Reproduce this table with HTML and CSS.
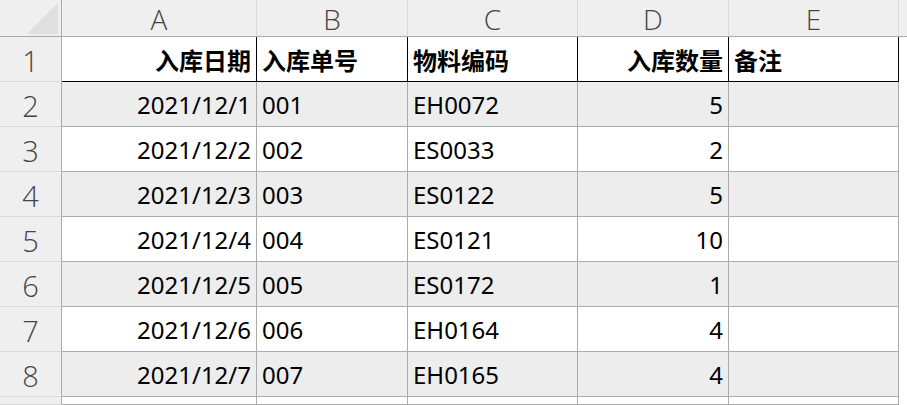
FILE: index.html
```html
<!DOCTYPE html>
<html lang="zh-CN">
<head>
<meta charset="utf-8">
<title>入库记录</title>
<link rel="stylesheet" href="styles.css">
</head>
<body>
<div class="sheet">
  <div class="corner"><span class="tri"></span></div>
  <div class="colhead">A</div>
  <div class="colhead">B</div>
  <div class="colhead">C</div>
  <div class="colhead">D</div>
  <div class="colhead">E</div>
  <div class="colhead rest"></div>

  <div class="rowhead">1</div>
  <div class="cell th right">入库日期</div>
  <div class="cell th">入库单号</div>
  <div class="cell th">物料编码</div>
  <div class="cell th right">入库数量</div>
  <div class="cell th">备注</div>
  <div class="cell blank"></div>

  <div class="rowhead">2</div>
  <div class="cell g right">2021/12/1</div>
  <div class="cell g">001</div>
  <div class="cell g">EH0072</div>
  <div class="cell g right">5</div>
  <div class="cell g"></div>
  <div class="cell blank"></div>

  <div class="rowhead">3</div>
  <div class="cell right">2021/12/2</div>
  <div class="cell">002</div>
  <div class="cell">ES0033</div>
  <div class="cell right">2</div>
  <div class="cell"></div>
  <div class="cell blank"></div>

  <div class="rowhead">4</div>
  <div class="cell g right">2021/12/3</div>
  <div class="cell g">003</div>
  <div class="cell g">ES0122</div>
  <div class="cell g right">5</div>
  <div class="cell g"></div>
  <div class="cell blank"></div>

  <div class="rowhead">5</div>
  <div class="cell right">2021/12/4</div>
  <div class="cell">004</div>
  <div class="cell">ES0121</div>
  <div class="cell right">10</div>
  <div class="cell"></div>
  <div class="cell blank"></div>

  <div class="rowhead">6</div>
  <div class="cell g right">2021/12/5</div>
  <div class="cell g">005</div>
  <div class="cell g">ES0172</div>
  <div class="cell g right">1</div>
  <div class="cell g"></div>
  <div class="cell blank"></div>

  <div class="rowhead">7</div>
  <div class="cell right">2021/12/6</div>
  <div class="cell">006</div>
  <div class="cell">EH0164</div>
  <div class="cell right">4</div>
  <div class="cell"></div>
  <div class="cell blank"></div>

  <div class="rowhead">8</div>
  <div class="cell g right">2021/12/7</div>
  <div class="cell g">007</div>
  <div class="cell g">EH0165</div>
  <div class="cell g right">4</div>
  <div class="cell g"></div>
  <div class="cell blank"></div>

  <div class="rowhead"></div>
  <div class="cell right"></div>
  <div class="cell"></div>
  <div class="cell"></div>
  <div class="cell right"></div>
  <div class="cell"></div>
  <div class="cell blank"></div>
</div>
</body>
</html>
```

FILE: styles.css
```css
html, body {
  margin: 0;
  padding: 0;
  background: #ffffff;
  overflow: hidden;
}

.sheet {
  display: grid;
  grid-template-columns: 62px 195px 151px 170px 151px 170px 1fr;
  grid-template-rows: 37px repeat(8, 45px) 8px;
  width: 907px;
  height: 405px;
  overflow: hidden;
  font-family: "Noto Sans", "Noto Sans CJK SC", sans-serif;
}

.corner {
  background: #efefef;
  border-right: 1px solid #ababab;
  border-bottom: 1px solid #ababab;
  display: flex;
  justify-content: flex-end;
  align-items: flex-end;
  padding: 0 3px 2px 0;
}

.tri {
  width: 31px;
  height: 31px;
  background: #dfdfdf;
  clip-path: polygon(100% 0, 100% 100%, 0 100%);
}

.colhead {
  background: #efefef;
  border-right: 1px solid #d9d9d9;
  border-bottom: 1px solid #ababab;
  display: flex;
  align-items: center;
  justify-content: center;
  font-family: "Open Sans", "Noto Sans", sans-serif;
  font-weight: 300;
  font-size: 28px;
  color: #444444;
  line-height: 34px;
  padding-top: 1px;
}

.colhead.rest {
  border-right: none;
}

.rowhead {
  background: #efefef;
  border-right: 1px solid #ababab;
  border-bottom: 1px solid #d9d9d9;
  display: flex;
  align-items: center;
  justify-content: center;
  font-family: "Open Sans", "Noto Sans", sans-serif;
  font-weight: 300;
  font-size: 29px;
  color: #444444;
  line-height: 40px;
  padding-top: 3px;
}

.cell {
  border-right: 1px solid #ababab;
  border-bottom: 1px solid #ababab;
  display: flex;
  align-items: center;
  padding: 0 5px 0 5px;
  font-size: 24px;
  color: #000000;
  white-space: nowrap;
  overflow: hidden;
  background: #ffffff;
}

.cell.right {
  justify-content: flex-end;
}

.cell.g {
  background: #ededed;
}

.cell.th {
  font-family: "Noto Sans CJK SC", "Noto Sans", sans-serif;
  font-weight: 700;
  font-size: 24px;
  border-right-color: #000000;
  border-bottom-color: #000000;
}

.cell.blank {
  border-right: none;
  border-bottom: none;
  background: #ffffff;
}
```
